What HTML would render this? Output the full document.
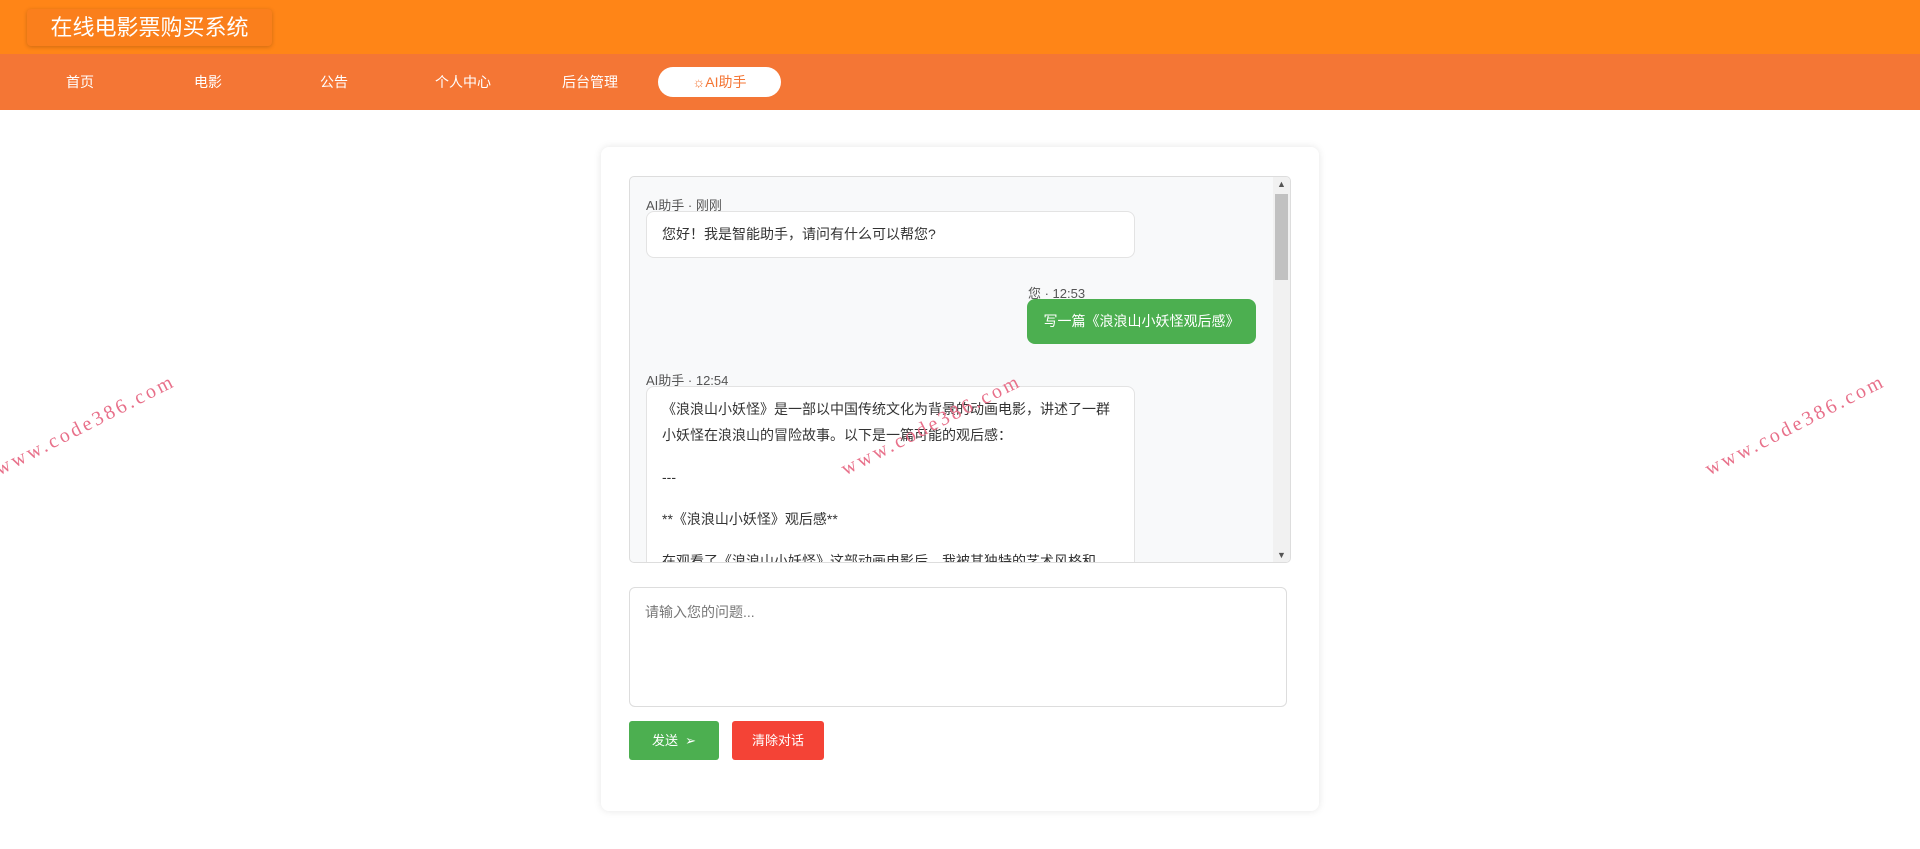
<!DOCTYPE html>
<html><head><meta charset="utf-8"><style>
*{box-sizing:border-box;margin:0;padding:0}
body{width:1920px;height:849px;background:#fff;font-family:"Liberation Sans","Noto Sans CJK SC",sans-serif;position:relative;overflow:hidden}
.top{position:absolute;left:0;top:0;width:1920px;height:54px;background:#ff8517;box-shadow:0 2px 4px rgba(0,0,0,.15)}
.title{position:absolute;left:27px;top:9px;width:245px;height:37px;background:#fa7f1c;border-radius:4px;box-shadow:0 1px 4px rgba(0,0,0,.2);color:#fff;font-size:22px;line-height:37px;text-align:center}
.nav{position:absolute;left:0;top:54px;width:1920px;height:56px;background:#f47635}
.nav span{position:absolute;top:0;line-height:56px;color:#fff;font-size:14px;transform:translateX(-50%)}
.ai{position:absolute;left:658px;top:67px;width:123px;height:30px;background:#fff;border-radius:15px;color:#f47635;font-size:14px;line-height:30px;text-align:center}
.card{position:absolute;left:601px;top:147px;width:718px;height:664px;background:#fff;border-radius:8px;box-shadow:0 0 8px rgba(0,0,0,.1)}
.chat{position:absolute;left:629px;top:176px;width:662px;height:387px;background:#f8f9fa;border:1px solid #ddd;border-radius:5px;overflow:hidden}
.sb{position:absolute;right:0;top:0;width:17px;height:100%;background:#f1f1f1}
.sb i{position:absolute;left:2px;top:17px;width:13px;height:86px;background:#c1c1c1}
.sb b{position:absolute;left:0;width:17px;text-align:center;font-size:9px;color:#555;font-weight:normal}
.meta{position:absolute;font-size:13px;color:#555}
.bub{position:absolute;background:#fff;border:1px solid #e3e3e3;border-radius:8px;font-size:14px;color:#333;padding:0 15px}
.bub p{margin-bottom:16px}
.g{position:absolute;background:#4caf50;color:#fff;border-radius:8px;font-size:14px;text-align:center}
.ta{position:absolute;left:629px;top:587px;width:658px;height:120px;border:1px solid #ddd;border-radius:6px;color:#777;font-size:14px;padding:14px 15px}
.btn{position:absolute;top:721px;height:39px;color:#fff;font-size:13px;line-height:39px;text-align:center;border-radius:3px}
.wm{position:absolute;color:#e8708a;font-family:"Liberation Serif",serif;font-size:20px;letter-spacing:3px;transform:rotate(-27deg);transform-origin:left bottom;white-space:nowrap}
</style></head><body>
<div class="top"><div class="title">在线电影票购买系统</div></div>
<div class="nav"><span style="left:80px">首页</span><span style="left:208px">电影</span><span style="left:334px">公告</span><span style="left:463px">个人中心</span><span style="left:590px">后台管理</span></div>
<div class="ai">☼AI助手</div>
<div class="card"></div>
<div class="chat">
<div class="sb"><b style="top:2px">▲</b><i></i><b style="bottom:2px">▼</b></div>
<div class="meta" style="left:16px;top:18px">AI助手 · 刚刚</div>
<div class="bub" style="left:16px;top:34px;width:489px;height:47px;line-height:45px">您好！我是智能助手，请问有什么可以帮您?</div>
<div class="meta" style="left:398px;top:106px">您 · 12:53</div>
<div class="g" style="left:397px;top:122px;width:229px;height:45px;line-height:45px">写一篇《浪浪山小妖怪观后感》</div>
<div class="meta" style="left:16px;top:193px">AI助手 · 12:54</div>
<div class="bub" style="left:16px;top:209px;width:489px;height:200px;line-height:26px;padding-top:9px;padding-right:20px"><p>《浪浪山小妖怪》是一部以中国传统文化为背景的动画电影，讲述了一群小妖怪在浪浪山的冒险故事。以下是一篇可能的观后感：</p><p>---</p><p>**《浪浪山小妖怪》观后感**</p><p>在观看了《浪浪山小妖怪》这部动画电影后，我被其独特的艺术风格和</p></div>
</div>
<div class="ta">请输入您的问题...</div>
<div class="btn" style="left:629px;width:90px;background:#4caf50">发送 &nbsp;➢</div>
<div class="btn" style="left:732px;width:92px;background:#f44336">清除对话</div>
<div class="wm" style="left:2px;top:458px">www.code386.com</div>
<div class="wm" style="left:848px;top:458px">www.code386.com</div>
<div class="wm" style="left:1712px;top:458px">www.code386.com</div>
</body></html>
